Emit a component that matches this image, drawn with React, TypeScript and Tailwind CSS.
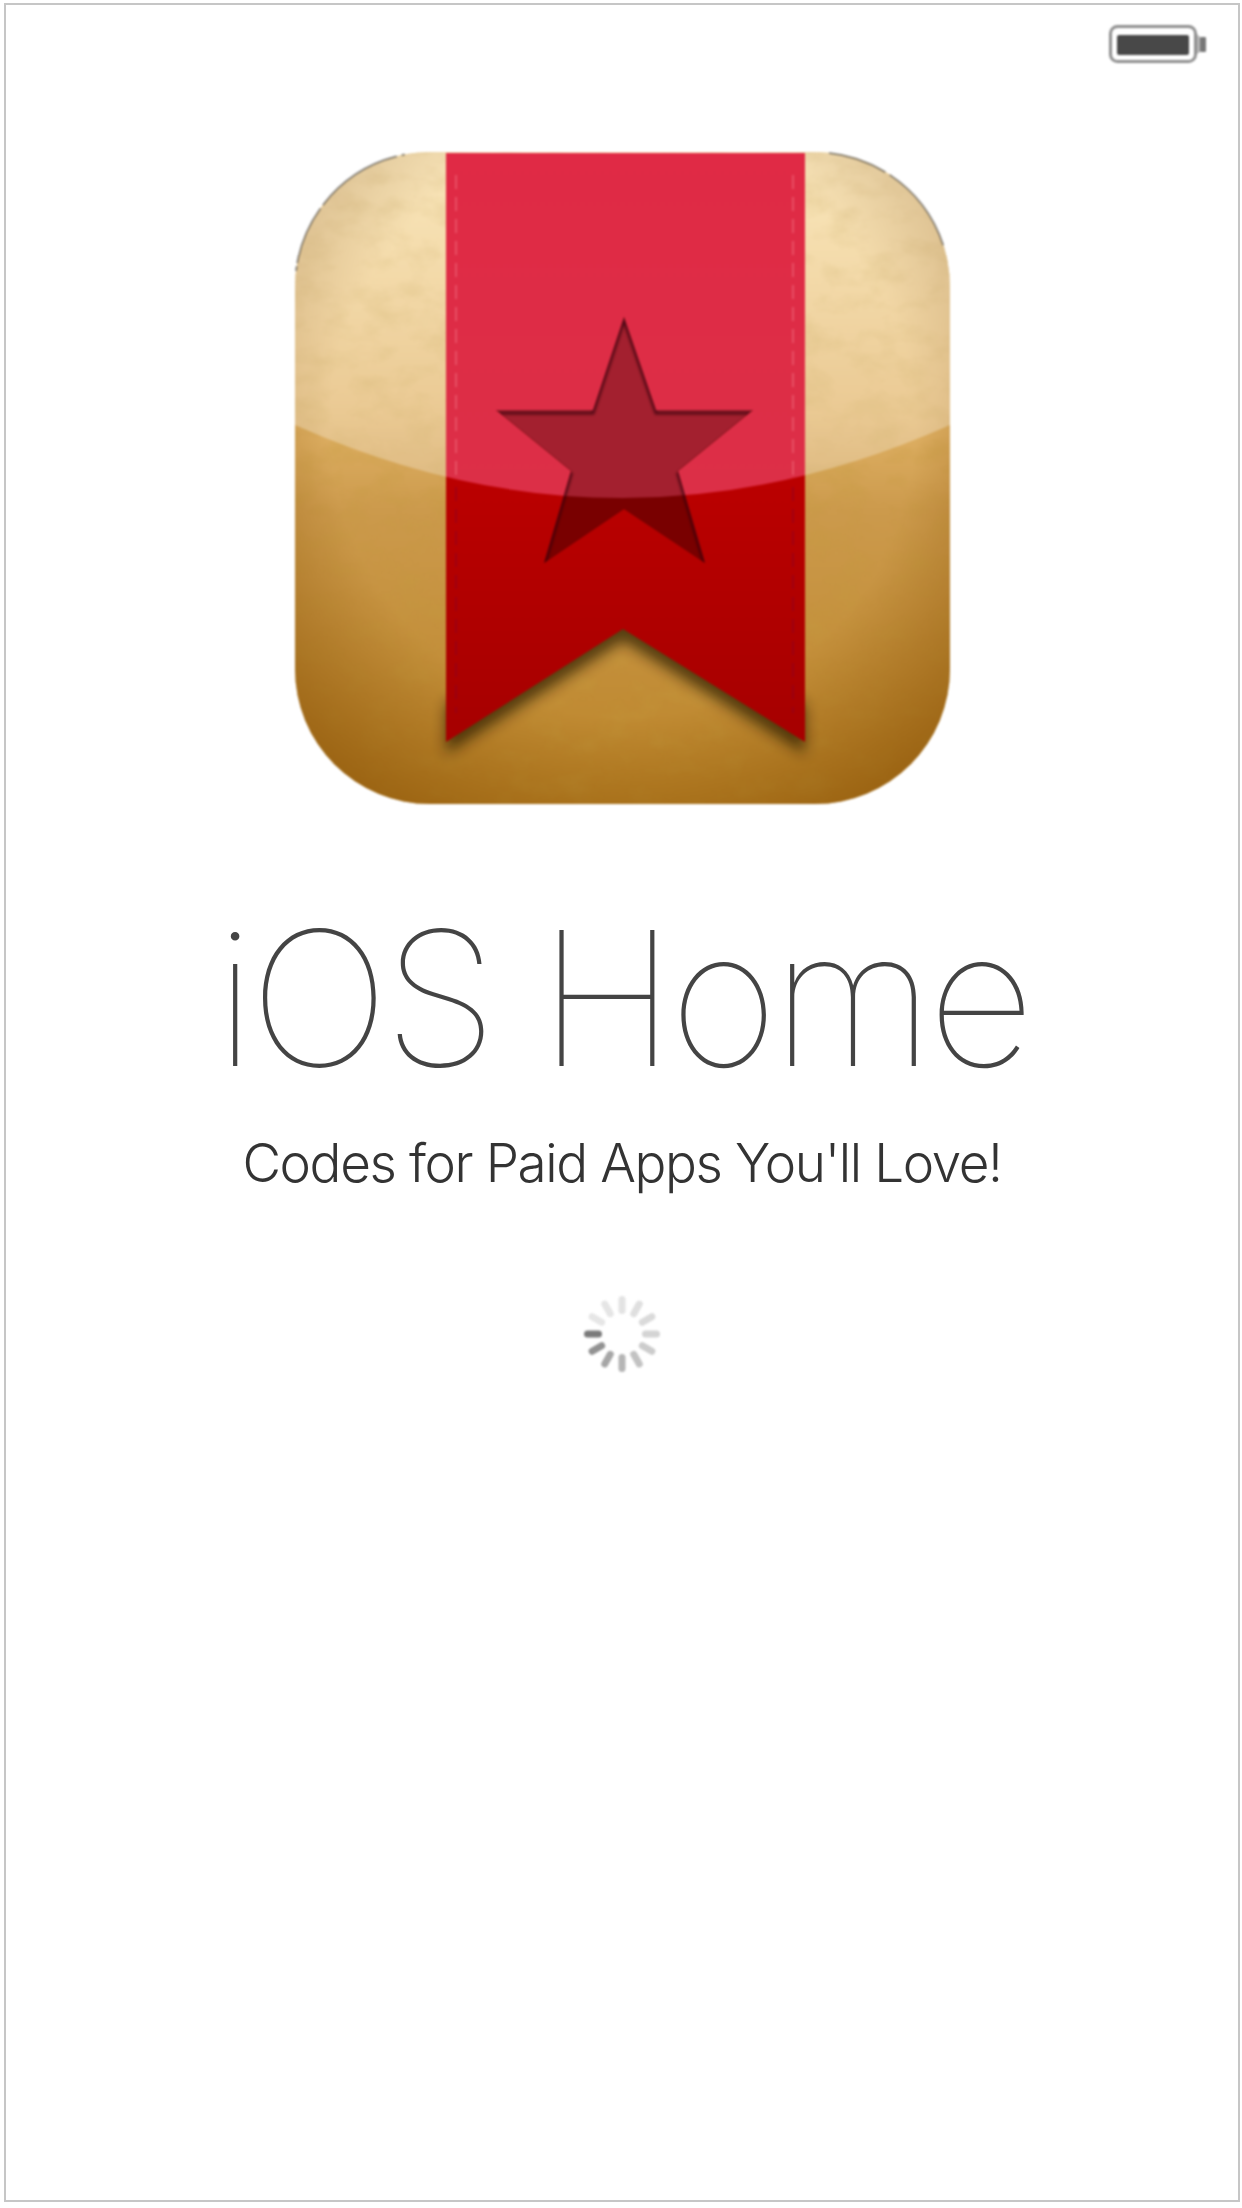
import React from 'react'

const ribbon = "M149 0 H508 V589 L326 476 L149 589 Z"
const ribbonTail = "M149 589 L326 476 L508 589 V540 L326 440 L149 540 Z"
const star = "M327 164 L359 257 H456 L381 318 L408 410 L327 356 L247 410 L274 318 L199 257 H296 Z"
const gloss = "M-2 -1 H653 V272 Q325 418 -2 272 Z"

function AppIcon() {
  return (
    <svg viewBox="-2 -1 655 652" className="w-[655px] h-[652px] blur-[0.8px]">
      <defs>
        <linearGradient id="paper" x1="0" y1="0" x2="0" y2="1">
          <stop offset="0" stopColor="#f8da96" />
          <stop offset="0.4" stopColor="#e2b468" />
          <stop offset="0.55" stopColor="#cc9a4c" />
          <stop offset="1" stopColor="#bb8428" />
        </linearGradient>
        <radialGradient id="vignette" cx="0.5" cy="0.42" r="0.72">
          <stop offset="0.62" stopColor="#8a5206" stopOpacity="0" />
          <stop offset="1" stopColor="#8a5206" stopOpacity="0.75" />
        </radialGradient>
        <linearGradient id="ribbonRed" x1="0" y1="0" x2="0" y2="1">
          <stop offset="0.5" stopColor="#bd0000" />
          <stop offset="1" stopColor="#a60000" />
        </linearGradient>
        <linearGradient id="ribbonPink" x1="0" y1="0" x2="0" y2="1">
          <stop offset="0" stopColor="#e02a45" />
          <stop offset="1" stopColor="#da3349" />
        </linearGradient>
        <linearGradient id="glossWhite" x1="0" y1="0" x2="0" y2="1">
          <stop offset="0" stopColor="#ffffff" stopOpacity="0.36" />
          <stop offset="1" stopColor="#ffffff" stopOpacity="0.26" />
        </linearGradient>
        <filter id="grain" x="0" y="0" width="100%" height="100%">
          <feTurbulence type="fractalNoise" baseFrequency="0.03 0.045" numOctaves="5" seed="11" />
          <feColorMatrix values="0 0 0 0 0.55  0 0 0 0 0.33  0 0 0 0 0.05  0 0 0 1.6 -0.7" />
        </filter>
        <filter id="ribbonShadow" x="-20%" y="-30%" width="140%" height="170%">
          <feGaussianBlur stdDeviation="7" />
        </filter>
        <filter id="starEdge" x="-10%" y="-10%" width="120%" height="120%">
          <feGaussianBlur stdDeviation="1.2" />
        </filter>
        <clipPath id="iconShape">
          <rect x="-2" y="-1" width="655" height="652" rx="135" ry="135" />
        </clipPath>
        <clipPath id="glossShape">
          <path d={gloss} />
        </clipPath>
        <clipPath id="starShape">
          <path d={star} />
        </clipPath>
      </defs>

      <g clipPath="url(#iconShape)">
        <rect x="-2" y="-1" width="655" height="652" fill="url(#paper)" />
        <rect x="-2" y="-1" width="655" height="652" filter="url(#grain)" opacity="0.45" />
        <rect x="-2" y="-1" width="655" height="652" fill="url(#vignette)" />
        <path d={gloss} fill="url(#glossWhite)" />

        {/* ribbon */}
        <path d={ribbonTail} transform="translate(0 12)" fill="#2b1c00" opacity="0.72" filter="url(#ribbonShadow)" />
        <path d={ribbon} fill="url(#ribbonRed)" />
        <g clipPath="url(#glossShape)">
          <path d={ribbon} fill="url(#ribbonPink)" />
        </g>

        {/* stitching */}
        <g clipPath="url(#glossShape)" stroke="#f2808f" strokeWidth="1.5" strokeDasharray="14 8" opacity="0.55">
          <path d="M159 22 V560" />
          <path d="M496 22 V560" />
        </g>
        <g stroke="#880028" strokeWidth="1.5" strokeDasharray="14 8" opacity="0.6">
          <path d="M159 334 V560" />
          <path d="M496 334 V560" />
        </g>

        {/* star cut out, shadow falls from the top edges */}
        <path d={star} fill="#790000" />
        <g clipPath="url(#glossShape)">
          <path d={star} fill="#a3202f" />
        </g>
        <g clipPath="url(#starShape)">
          <path d={star} transform="translate(0 3)" fill="none" stroke="#30000a" strokeWidth="3" opacity="0.7" filter="url(#starEdge)" />
        </g>
      </g>

      {/* dark rim left on the top corners */}
      <g fill="none" stroke="#333333" strokeWidth="2" opacity="0.5">
        <path d="M-1 118 A135 135 0 0 1 118 0" strokeDasharray="5 3 60 4 90" />
        <path d="M532 0 A135 135 0 0 1 652 118" strokeDasharray="60 5 90" />
      </g>
    </svg>
  )
}

function Battery() {
  return (
    <svg viewBox="0 0 98 38" className="w-[98px] h-[38px] blur-[1px]">
      <rect x="1.5" y="1.5" width="85" height="35" rx="7" fill="none" stroke="#8f8f8f" strokeWidth="3" />
      <rect x="8" y="10" width="72" height="20" rx="2" fill="#484848" />
      <path d="M88 9 L91 12 V27 L88 29 Z" fill="#b5b5b5" />
      <rect x="91" y="12" width="6" height="15" rx="1" fill="#777777" />
    </svg>
  )
}

function Spinner() {
  // darkest spoke sits at nine o'clock and fades going counter clockwise
  const shades = ["#7a7a7a", "#929292", "#a6a6a6", "#b5b5b5", "#c2c2c2", "#cccccc", "#d4d4d4", "#dadada", "#dfdfdf", "#e3e3e3", "#e5e5e5", "#e6e6e6"]
  return (
    <svg viewBox="0 0 80 80" className="w-[80px] h-[80px] blur-[1.1px]">
      {shades.map((shade, i) => (
        <rect
          key={i}
          x="2"
          y="36.5"
          width="18"
          height="7"
          rx="3.5"
          fill={shade}
          transform={`rotate(${-30 * i} 40 40)`}
        />
      ))}
    </svg>
  )
}

export default function App() {
  return (
    <div className="w-[1242px] h-[2208px] bg-white pt-[3px] pl-[4px]">
      <div className="w-[1236px] h-[2199px] border-2 border-[#c6c6c6] flex flex-col">
        {/* STATUS BAR */}
        <div className="flex justify-end pt-[20px] pr-[31px]">
          <Battery />
        </div>

        {/* SPLASH */}
        <div className="flex flex-col items-center mt-[89px]">
          <AppIcon />
          <h1 className="mt-[94px] font-['Inter'] font-thin text-[#444444] text-[187px] leading-[200px] tracking-[-6px] blur-[0.5px] whitespace-nowrap">
            iOS Home
          </h1>
          <p className="mt-[35px] font-['Inter'] font-light text-[#333333] text-[53px] leading-[60px] tracking-[-1.4px] blur-[0.5px] whitespace-nowrap">
            Codes for Paid Apps You'll Love!
          </p>
          <div className="mt-[101px]">
            <Spinner />
          </div>
        </div>
      </div>
    </div>
  )
}
